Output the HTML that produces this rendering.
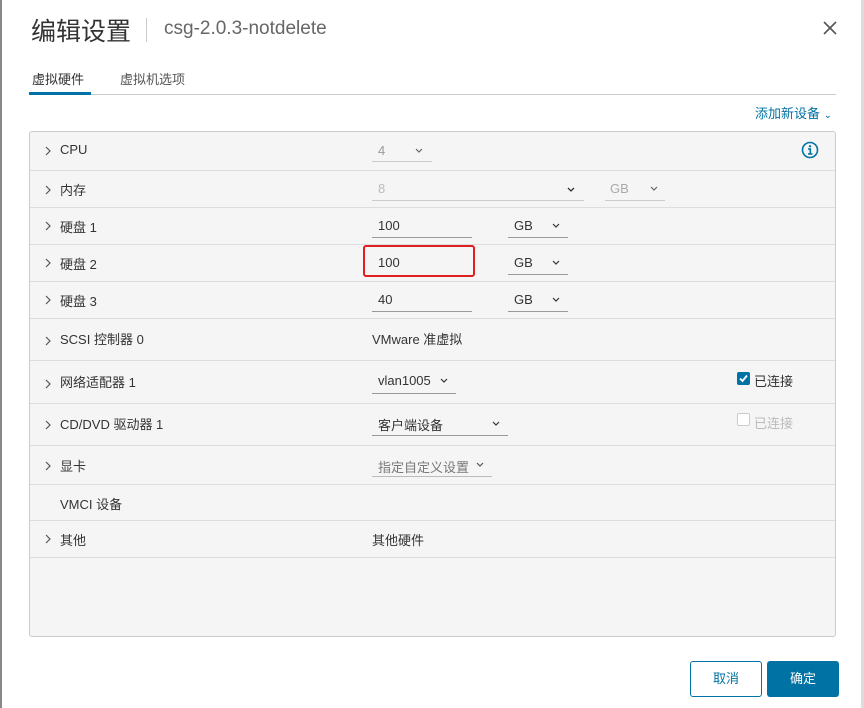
<!DOCTYPE html>
<html><head><meta charset="utf-8"><style>
*{box-sizing:border-box;margin:0;padding:0}
body{width:864px;height:708px;background:#fff;font-family:"Liberation Sans","Noto Sans CJK SC",sans-serif;color:#333;position:relative;overflow:hidden;font-size:13px}
.abs{position:absolute}
.title{left:31px;top:12px;font-size:25px;color:#333}
.sep{left:146px;top:18px;width:1px;height:24px;background:#ccc}
.sub{left:164px;top:18px;font-size:19px;color:#666}
.close{left:822px;top:20px}
.tab1{left:32px;top:69px;font-size:13px;color:#333}
.tab2{left:120px;top:69px;font-size:13px;color:#555}
.tabline{left:29px;top:94px;width:807px;height:1px;background:#ccc}
.tabsel{left:29px;top:92px;width:62px;height:3px;background:#0072a3}
.add{left:755px;top:103px;color:#0072a3;font-size:13px}
.table{left:29px;top:131px;width:807px;height:506px;border:1px solid #ccc;border-radius:3px;background:#f5f5f5}
.row{position:absolute;left:0;width:805px;border-bottom:1px solid #ddd}
.lbl{position:absolute;left:30px;font-size:13px;color:#333}
.chev{position:absolute;left:15px;width:6px;height:10px}
.val{position:absolute;font-size:13px;color:#333}
.ul{position:absolute;height:1px;background:#999}
.dd{position:absolute;width:8px;height:8px}
</style></head><body>
<div class="abs" style="left:0;top:0;width:2px;height:708px;background:#888"></div>
<div class="abs" style="left:861px;top:0;width:3px;height:708px;background:#ddd"></div>
<div class="abs title">编辑设置</div>
<div class="abs sep"></div>
<div class="abs sub">csg-2.0.3-notdelete</div>
<svg class="abs close" width="16" height="16" viewBox="0 0 16 16"><path d="M2 2L14 14M14 2L2 14" stroke="#555" stroke-width="1.6"/></svg>
<div class="abs tab1">虚拟硬件</div>
<div class="abs tab2">虚拟机选项</div>
<div class="abs tabline"></div>
<div class="abs tabsel"></div>
<div class="abs add">添加新设备 <span style="font-size:10px">&#8964;</span></div>
<div class="abs table">
 <div class="row" style="top:0;height:39px"><svg class="chev" style="top:14px" viewBox="0 0 6 10"><path d="M1 1l4 4-4 4" fill="none" stroke="#555" stroke-width="1.2"/></svg><span class="lbl" style="top:10px">CPU</span>
  <span class="val" style="left:348px;top:11px;color:#999">4</span><svg class="dd" style="left:385px;top:15px" viewBox="0 0 8 8"><path d="M1 2l3 3 3-3" fill="none" stroke="#666" stroke-width="1.2"/></svg><div class="ul" style="left:342px;top:29px;width:60px;background:#ccc"></div>
  <svg class="abs" style="left:771px;top:9px" width="18" height="18" viewBox="0 0 18 18"><circle cx="9" cy="9" r="7.5" fill="none" stroke="#0072a3" stroke-width="1.6"/><circle cx="9" cy="5.3" r="1.2" fill="#0072a3"/><path d="M7 8h2.3v5M7 13h4.5" stroke="#0072a3" stroke-width="1.6" fill="none"/></svg></div>
 <div class="row" style="top:39px;height:37px"><svg class="chev" style="top:14px" viewBox="0 0 6 10"><path d="M1 1l4 4-4 4" fill="none" stroke="#555" stroke-width="1.2"/></svg><span class="lbl" style="top:9px">内存</span>
  <span class="val" style="left:348px;top:10px;color:#bbb">8</span><svg class="dd" style="left:537px;top:15px" viewBox="0 0 8 8"><path d="M1 2l3 3 3-3" fill="none" stroke="#333" stroke-width="1.3"/></svg><div class="ul" style="left:342px;top:29px;width:212px;background:#ccc"></div>
  <span class="val" style="left:580px;top:10px;color:#aaa">GB</span><svg class="dd" style="left:620px;top:14px" viewBox="0 0 8 8"><path d="M1 2l3 3 3-3" fill="none" stroke="#666" stroke-width="1.2"/></svg><div class="ul" style="left:575px;top:29px;width:60px;background:#ccc"></div></div>
 <div class="row" style="top:76px;height:37px"><svg class="chev" style="top:13px" viewBox="0 0 6 10"><path d="M1 1l4 4-4 4" fill="none" stroke="#555" stroke-width="1.2"/></svg><span class="lbl" style="top:9px">硬盘 1</span>
  <span class="val" style="left:348px;top:10px">100</span><div class="ul" style="left:342px;top:29px;width:100px"></div>
  <span class="val" style="left:484px;top:10px">GB</span><svg class="dd" style="left:522px;top:14px" viewBox="0 0 8 8"><path d="M1 2l3 3 3-3" fill="none" stroke="#333" stroke-width="1.2"/></svg><div class="ul" style="left:478px;top:29px;width:60px"></div></div>
 <div class="row" style="top:113px;height:37px"><svg class="chev" style="top:13px" viewBox="0 0 6 10"><path d="M1 1l4 4-4 4" fill="none" stroke="#555" stroke-width="1.2"/></svg><span class="lbl" style="top:9px">硬盘 2</span>
  <span class="val" style="left:348px;top:10px">100</span>
  <div class="abs" style="left:333px;top:0;width:112px;height:32px;border:2px solid #e02020;border-radius:3px"></div>
  <span class="val" style="left:484px;top:10px">GB</span><svg class="dd" style="left:522px;top:14px" viewBox="0 0 8 8"><path d="M1 2l3 3 3-3" fill="none" stroke="#333" stroke-width="1.2"/></svg><div class="ul" style="left:478px;top:29px;width:60px"></div></div>
 <div class="row" style="top:150px;height:37px"><svg class="chev" style="top:13px" viewBox="0 0 6 10"><path d="M1 1l4 4-4 4" fill="none" stroke="#555" stroke-width="1.2"/></svg><span class="lbl" style="top:9px">硬盘 3</span>
  <span class="val" style="left:348px;top:10px">40</span><div class="ul" style="left:342px;top:29px;width:100px"></div>
  <span class="val" style="left:484px;top:10px">GB</span><svg class="dd" style="left:522px;top:14px" viewBox="0 0 8 8"><path d="M1 2l3 3 3-3" fill="none" stroke="#333" stroke-width="1.2"/></svg><div class="ul" style="left:478px;top:29px;width:60px"></div></div>
 <div class="row" style="top:187px;height:42px"><svg class="chev" style="top:17px" viewBox="0 0 6 10"><path d="M1 1l4 4-4 4" fill="none" stroke="#555" stroke-width="1.2"/></svg><span class="lbl" style="top:10px">SCSI 控制器 0</span>
  <span class="val" style="left:342px;top:10px">VMware 准虚拟</span></div>
 <div class="row" style="top:229px;height:43px"><svg class="chev" style="top:18px" viewBox="0 0 6 10"><path d="M1 1l4 4-4 4" fill="none" stroke="#555" stroke-width="1.2"/></svg><span class="lbl" style="top:11px">网络适配器 1</span>
  <span class="val" style="left:348px;top:12px">vlan1005</span><svg class="dd" style="left:410px;top:16px" viewBox="0 0 8 8"><path d="M1 2l3 3 3-3" fill="none" stroke="#333" stroke-width="1.2"/></svg><div class="ul" style="left:342px;top:32px;width:84px"></div>
  <div class="abs" style="left:707px;top:11px;width:13px;height:13px;background:#0072a3;border-radius:2px"></div><svg class="abs" style="left:707px;top:11px" width="13" height="13" viewBox="0 0 13 13"><path d="M3 6.5l2.5 2.5 4.5-5.5" fill="none" stroke="#fff" stroke-width="1.8"/></svg>
  <span class="val" style="left:724px;top:10px">已连接</span></div>
 <div class="row" style="top:272px;height:42px"><svg class="chev" style="top:16px" viewBox="0 0 6 10"><path d="M1 1l4 4-4 4" fill="none" stroke="#555" stroke-width="1.2"/></svg><span class="lbl" style="top:10px">CD/DVD 驱动器 1</span>
  <span class="val" style="left:348px;top:11px">客户端设备</span><svg class="dd" style="left:462px;top:16px" viewBox="0 0 8 8"><path d="M1 2l3 3 3-3" fill="none" stroke="#333" stroke-width="1.2"/></svg><div class="ul" style="left:342px;top:31px;width:136px"></div>
  <div class="abs" style="left:707px;top:9px;width:13px;height:13px;border:1px solid #ccc;border-radius:2px;background:#fff"></div>
  <span class="val" style="left:724px;top:9px;color:#bbb">已连接</span></div>
 <div class="row" style="top:314px;height:39px"><svg class="chev" style="top:15px" viewBox="0 0 6 10"><path d="M1 1l4 4-4 4" fill="none" stroke="#555" stroke-width="1.2"/></svg><span class="lbl" style="top:10px">显卡</span>
  <span class="val" style="left:348px;top:11px;color:#777">指定自定义设置</span><svg class="dd" style="left:446px;top:15px" viewBox="0 0 8 8"><path d="M1 2l3 3 3-3" fill="none" stroke="#555" stroke-width="1.2"/></svg><div class="ul" style="left:342px;top:30px;width:120px;background:#bbb"></div></div>
 <div class="row" style="top:353px;height:36px"><span class="lbl" style="top:9px">VMCI 设备</span></div>
 <div class="row" style="top:389px;height:37px"><svg class="chev" style="top:13px" viewBox="0 0 6 10"><path d="M1 1l4 4-4 4" fill="none" stroke="#555" stroke-width="1.2"/></svg><span class="lbl" style="top:9px">其他</span>
  <span class="val" style="left:342px;top:9px">其他硬件</span></div>
</div>
<div class="abs" style="left:690px;top:661px;width:72px;height:36px;border:1px solid #0072a3;border-radius:3px;background:#fff;color:#0072a3;text-align:center;line-height:34px;font-size:13px">取消</div>
<div class="abs" style="left:767px;top:661px;width:72px;height:36px;border-radius:3px;background:#0072a3;color:#fff;text-align:center;line-height:36px;font-size:13px">确定</div>
</body></html>
